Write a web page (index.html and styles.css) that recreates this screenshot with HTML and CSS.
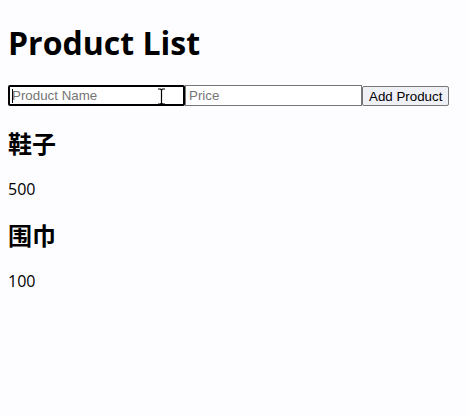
FILE: index.html
```html
<!DOCTYPE html>
<html>

<head>
    <title>Product List</title>
    <meta charset="utf-8">
    <link rel="stylesheet" href="styles.css">
</head>

<body>
    <div class="app">
        <h1>Product List</h1>
        <form class="add-form">
            <span class="field">
                <input class="input input-focus" type="text" placeholder="Product Name">
                <span class="caret"></span>
                <svg class="ibeam" width="9" height="17" viewBox="0 0 9 17">
                    <path d="M1 1h2.5l1 1 1-1H8M4.5 2v13M1 16h2.5l1-1 1 1H8" fill="none" stroke="#000" stroke-width="1.2"/>
                </svg>
            </span>
            <input class="input" type="text" placeholder="Price">
            <button class="btn" type="button">Add Product</button>
        </form>
        <div class="product">
            <h2>鞋子</h2>
            <p>500</p>
        </div>
        <div class="product">
            <h2>围巾</h2>
            <p>100</p>
        </div>
    </div>
</body>

</html>
```

FILE: styles.css
```css
html,
body {
    margin: 0;
    padding: 0;
}

body {
    background-color: #fdfdff;
    font-family: "Open Sans", "Noto Sans", "Noto Sans CJK SC", sans-serif;
    color: #000;
}

.app {
    padding: 21px 8px 0;
}

.app h1 {
    margin: 0 0 21px;
    font-size: 32px;
    line-height: 43px;
    font-weight: 700;
}

.add-form {
    display: flex;
    align-items: flex-start;
    margin: 0;
    padding-bottom: 2px;
}

.field {
    position: relative;
    display: flex;
}

.input {
    box-sizing: border-box;
    width: 177px;
    height: 21px;
    margin: 0;
    padding: 1px 3px;
    border: 1px solid #767676;
    border-radius: 0;
    background: #fff;
    font-family: "Liberation Sans", Arial, sans-serif;
    font-size: 13.33px;
    outline: none;
}

.input::placeholder {
    color: #757575;
}

.input-focus {
    border: 2px solid #000;
    border-radius: 2px;
    padding: 1px 2px;
}

.caret {
    position: absolute;
    left: 4px;
    top: 4px;
    width: 1px;
    height: 14px;
    background: #000;
}

.ibeam {
    position: absolute;
    left: 149px;
    top: 3px;
}

.btn {
    box-sizing: border-box;
    height: 20px;
    margin: 1px 0 0;
    padding: 0 6px;
    border: 1px solid #767676;
    border-radius: 2px;
    background-color: #efeff6;
    font-family: "Liberation Sans", Arial, sans-serif;
    font-size: 13.33px;
    color: #000;
}

.product h2 {
    margin: 20px 0;
    font-size: 24px;
    line-height: 31px;
    font-weight: 700;
}

.product p {
    margin: 16px 0;
    font-size: 16px;
    line-height: 21px;
}
```
